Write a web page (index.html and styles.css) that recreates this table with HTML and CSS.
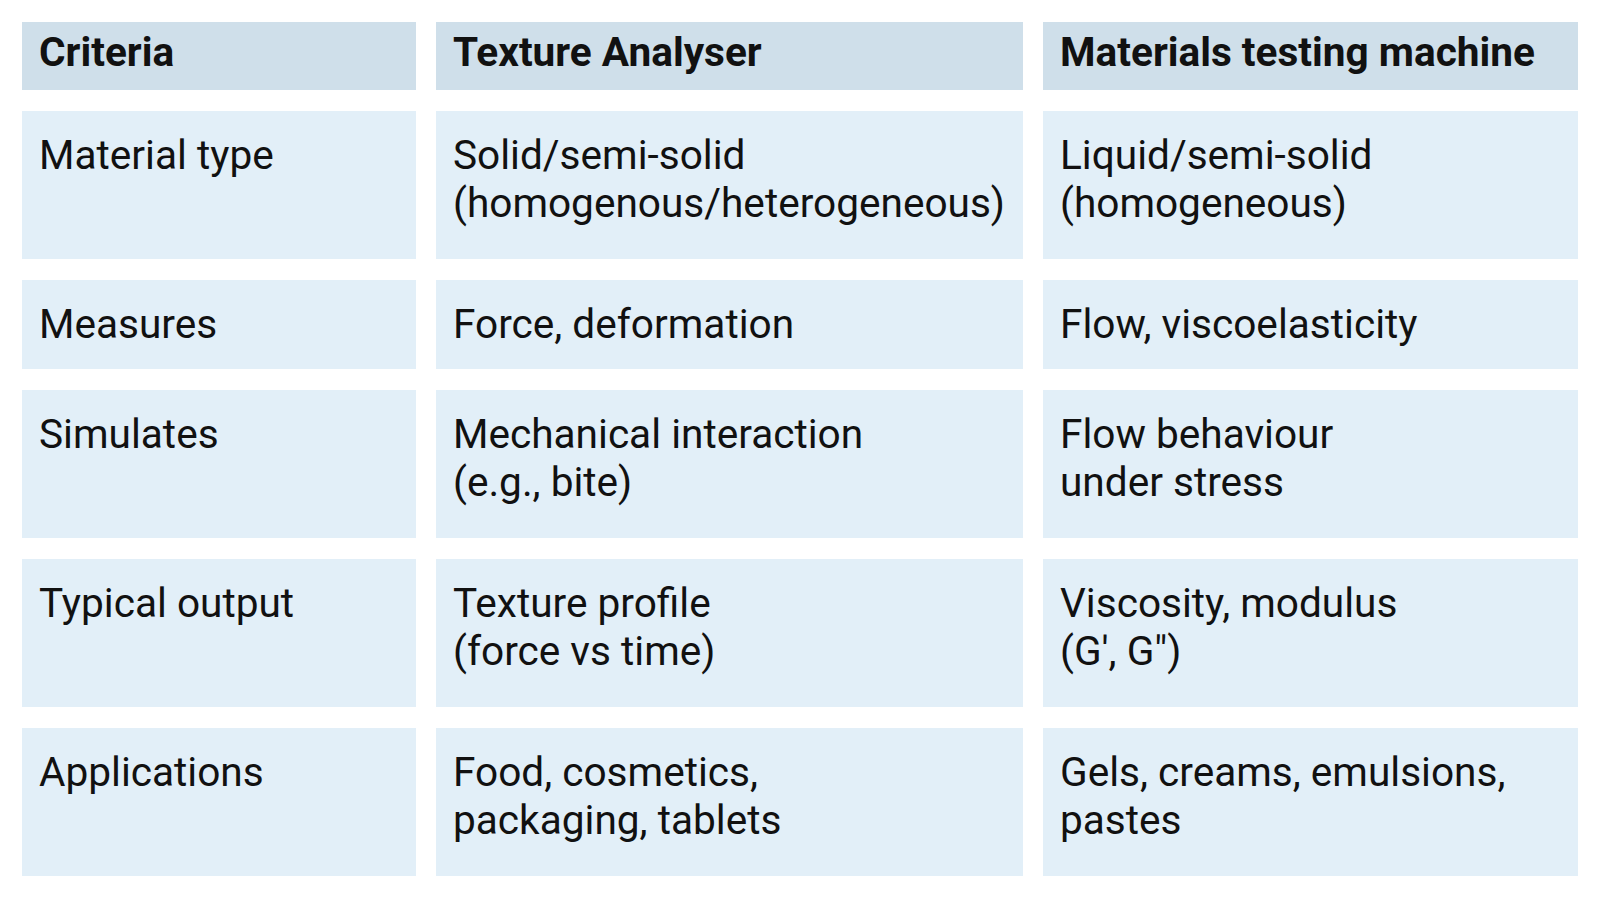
FILE: index.html
```html
<!DOCTYPE html>
<html lang="en">
<head>
<meta charset="utf-8">
<title>Texture Analyser vs Materials testing machine</title>
<link rel="stylesheet" href="styles.css">
</head>
<body>
<div class="compare">
  <div class="cell head">Criteria</div>
  <div class="cell head">Texture Analyser</div>
  <div class="cell head">Materials testing machine</div>

  <div class="cell">Material type</div>
  <div class="cell">Solid/semi-solid<br>(homogenous/heterogeneous)</div>
  <div class="cell">Liquid/semi-solid<br>(homogeneous)</div>

  <div class="cell">Measures</div>
  <div class="cell">Force, deformation</div>
  <div class="cell">Flow, viscoelasticity</div>

  <div class="cell">Simulates</div>
  <div class="cell">Mechanical interaction<br>(e.g., bite)</div>
  <div class="cell">Flow behaviour<br>under stress</div>

  <div class="cell">Typical output</div>
  <div class="cell">Texture profile<br>(force vs time)</div>
  <div class="cell">Viscosity, modulus<br>(G', G")</div>

  <div class="cell">Applications</div>
  <div class="cell">Food, cosmetics,<br>packaging, tablets</div>
  <div class="cell">Gels, creams, emulsions,<br>pastes</div>
</div>
</body>
</html>
```
FILE: styles.css
```css
html, body {
  margin: 0;
  padding: 0;
  background: #ffffff;
}

body {
  font-family: Roboto, "Liberation Sans", Arial, sans-serif;
  color: #111111;
}

.compare {
  display: grid;
  grid-template-columns: 394px 587px 535px;
  grid-template-rows: 68px 148px 89px 148px 148px 148px;
  column-gap: 20px;
  row-gap: 21px;
  padding: 22px;
}

.cell {
  background: #e2eff8;
  font-size: 40.6px;
  line-height: 48px;
  padding: 20px 16px 0 17px;
  white-space: nowrap;
}

.cell.head {
  background: #cfdfea;
  font-weight: 700;
  padding-top: 6px;
}
```
